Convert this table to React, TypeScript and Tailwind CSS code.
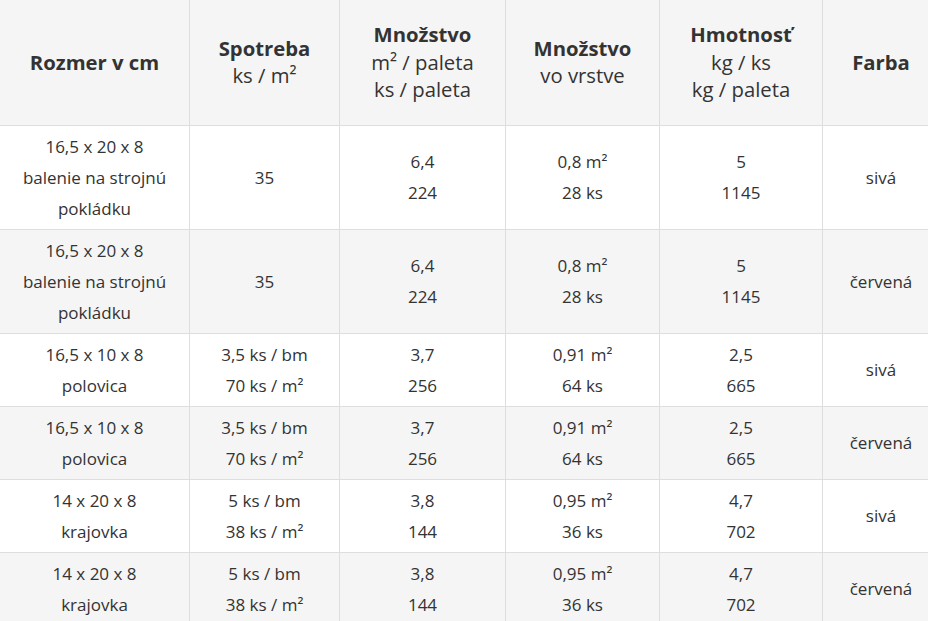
import React from "react";

type Row = {
  size: string[];
  usage: string[];
  qty: string[];
  layer: string[];
  weight: string[];
  color: string;
};

const rows: Row[] = [
  {
    size: ["16,5 x 20 x 8", "balenie na strojnú", "pokládku"],
    usage: ["35"],
    qty: ["6,4", "224"],
    layer: ["0,8 m²", "28 ks"],
    weight: ["5", "1145"],
    color: "sivá",
  },
  {
    size: ["16,5 x 20 x 8", "balenie na strojnú", "pokládku"],
    usage: ["35"],
    qty: ["6,4", "224"],
    layer: ["0,8 m²", "28 ks"],
    weight: ["5", "1145"],
    color: "červená",
  },
  {
    size: ["16,5 x 10 x 8", "polovica"],
    usage: ["3,5 ks / bm", "70 ks / m²"],
    qty: ["3,7", "256"],
    layer: ["0,91 m²", "64 ks"],
    weight: ["2,5", "665"],
    color: "sivá",
  },
  {
    size: ["16,5 x 10 x 8", "polovica"],
    usage: ["3,5 ks / bm", "70 ks / m²"],
    qty: ["3,7", "256"],
    layer: ["0,91 m²", "64 ks"],
    weight: ["2,5", "665"],
    color: "červená",
  },
  {
    size: ["14 x 20 x 8", "krajovka"],
    usage: ["5 ks / bm", "38 ks / m²"],
    qty: ["3,8", "144"],
    layer: ["0,95 m²", "36 ks"],
    weight: ["4,7", "702"],
    color: "sivá",
  },
  {
    size: ["14 x 20 x 8", "krajovka"],
    usage: ["5 ks / bm", "38 ks / m²"],
    qty: ["3,8", "144"],
    layer: ["0,95 m²", "36 ks"],
    weight: ["4,7", "702"],
    color: "červená",
  },
];

function Lines({ lines }: { lines: string[] }) {
  return (
    <>
      {lines.map((l, i) => (
        <div key={i}>{l}</div>
      ))}
    </>
  );
}

const th = "border border-[#dedede] px-2 py-[21px] align-middle text-center";
const td = "border border-[#dedede] px-2 py-[5px] align-middle text-center";

export default function App() {
  return (
    <div
      className="w-[928px] h-[621px] overflow-hidden bg-white text-[#333]"
      style={{ fontFamily: '"Open Sans", "Liberation Sans", sans-serif' }}
    >
      <table className="table-fixed border-collapse w-[940px] -ml-px -mt-px">
        <colgroup>
          <col className="w-[190px]" />
          <col className="w-[150px]" />
          <col className="w-[166px]" />
          <col className="w-[154px]" />
          <col className="w-[163px]" />
          <col className="w-[117px]" />
        </colgroup>
        <thead className="bg-[#f5f5f5] text-[20.3px] leading-[27.5px]">
          <tr>
            <th className={th}>
              <span className="font-bold">Rozmer v cm</span>
            </th>
            <th className={th + " font-normal"}>
              <div className="font-bold">Spotreba</div>
              <div>ks / m²</div>
            </th>
            <th className={th + " font-normal"}>
              <div className="font-bold">Množstvo</div>
              <div>m² / paleta</div>
              <div>ks / paleta</div>
            </th>
            <th className={th + " font-normal"}>
              <div className="font-bold">Množstvo</div>
              <div>vo vrstve</div>
            </th>
            <th className={th + " font-normal"}>
              <div className="font-bold">Hmotnosť</div>
              <div>kg / ks</div>
              <div>kg / paleta</div>
            </th>
            <th className={th}>
              <span className="font-bold">Farba</span>
            </th>
          </tr>
        </thead>
        <tbody className="text-[17px] leading-[31px]">
          {rows.map((r, i) => (
            <tr key={i} className={i % 2 === 1 ? "bg-[#f5f5f5]" : "bg-white"}>
              <td className={td}>
                <Lines lines={r.size} />
              </td>
              <td className={td}>
                <Lines lines={r.usage} />
              </td>
              <td className={td}>
                <Lines lines={r.qty} />
              </td>
              <td className={td}>
                <Lines lines={r.layer} />
              </td>
              <td className={td}>
                <Lines lines={r.weight} />
              </td>
              <td className={td}>{r.color}</td>
            </tr>
          ))}
        </tbody>
      </table>
    </div>
  );
}
